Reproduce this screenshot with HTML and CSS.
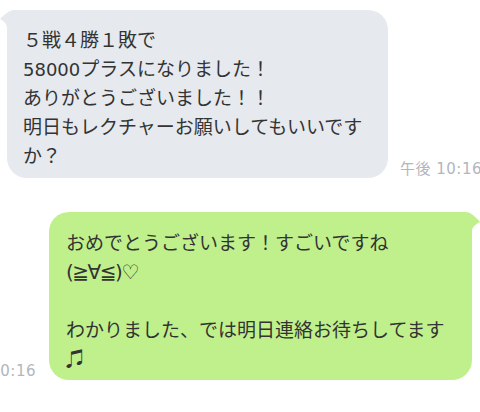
FILE: index.html
```
<!DOCTYPE html>
<html lang="ja">
<head>
    <meta charset="UTF-8">
    <meta name="viewport" content="width=device-width, initial-scale=1.0">
    <title>トーク</title>
    <link rel="stylesheet" href="styles.css">
</head>
<body>
    <div class="talk">
        <div class="row rowLeft">
            <div class="bubble bubbleGray">
                <svg class="tail tailLeft" width="27" height="30" viewBox="0 0 27 30"><path d="M27 0 H14 C10 0 5 4 0 9 C4 11 7 14 7 18 V30 H27 Z"/></svg>
                ５戦４勝１敗で<br>
                <span class="num">58000</span>プラスになりました！<br>
                ありがとうございました！！<br>
                明日もレクチャーお願いしてもいいです<br>
                か？
            </div>
            <div class="time">午後 10:16</div>
        </div>
        <div class="row rowRight">
            <div class="time">午後 10:16</div>
            <div class="bubble bubbleGreen">
                <svg class="tail tailRight" width="28" height="30" viewBox="0 0 28 30"><path d="M0 0 H14 C18 0 23 4 28 10 C24 12 20 15 20 19 V30 H0 Z"/></svg>
                おめでとうございます！すごいですね<br>
                <span class="kao">(≧∀≦)♡</span><br>
                <br>
                わかりました、では明日連絡お待ちしてます<br>
                ♫
            </div>
        </div>
    </div>
</body>
</html>
```

FILE: styles.css
```
html, body {
    margin: 0;
    background-color: #ffffff;
    overflow: hidden;
}
body {
    width: 480px;
    height: 412px;
    font-family: "Noto Sans CJK JP", "DejaVu Sans", sans-serif;
    color: #333333;
}
.talk {
    padding-top: 10px;
}
.row {
    display: flex;
    align-items: flex-end;
}
.rowLeft {
    padding-left: 7px;
    gap: 12px;
}
.rowRight {
    margin-top: 34px;
    padding-right: 8px;
    gap: 13px;
    justify-content: flex-end;
}
.bubble {
    position: relative;
    flex: none;
    box-sizing: border-box;
    font-size: 19px;
    line-height: 29px;
    border-radius: 20px;
    white-space: nowrap;
}
.bubbleGray {
    width: 381px;
    background-color: #e6e9ed;
    padding: 14px 20px 9px 16px;
}
.bubbleGreen {
    width: 423px;
    background-color: #c0f08b;
    padding: 15px 20px 8px 17px;
}
.num {
    font-family: "DejaVu Sans", sans-serif;
    font-size: 18px;
    line-height: 1;
}
.kao {
    font-family: "DejaVu Sans", sans-serif;
    font-size: 20px;
    letter-spacing: -1.5px;
    line-height: 1;
}
.tail {
    position: absolute;
    top: 0;
}
.tailLeft {
    left: -7px;
    fill: #e6e9ed;
}
.tailRight {
    right: -8px;
    fill: #c0f08b;
}
.time {
    flex: none;
    white-space: nowrap;
    font-family: "DejaVu Sans", "Noto Sans CJK JP", sans-serif;
    font-size: 15px;
    line-height: 18px;
    letter-spacing: 0.5px;
    color: #b2b6be;
}
```
